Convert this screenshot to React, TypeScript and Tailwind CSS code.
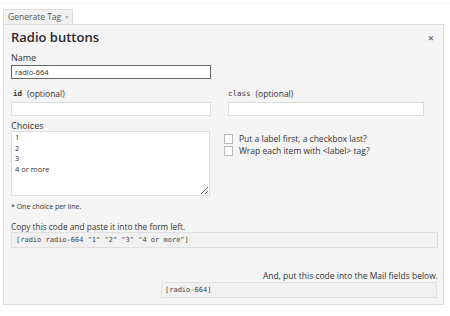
import React from "react";

const sans = { fontFamily: '"Open Sans", "Noto Sans", sans-serif' };
const mono = { fontFamily: '"DejaVu Sans Mono", monospace' };

export default function App() {
  return (
    <div
      className="w-[450px] h-[316px] bg-white pt-[3px] text-[#333]"
      style={sans}
    >
      <div className="h-px bg-[#eeeeee]" />
      <div className="pl-[3px] pt-[5px]">
        <div className="w-[70px] h-[15px] border border-[#dddddd] border-b-0 bg-[#f1f1f1] flex items-center pl-[4px] text-[8.5px] leading-none text-[#555] gap-[3px] whitespace-nowrap">
          <span>Generate Tag</span>
          <span className="text-[5px] text-[#999]">▼</span>
        </div>
      </div>
      <div className="ml-[3px] w-[441px] border border-[#dcdcdc] bg-[#f5f5f5] pl-[7px] pr-[5px] pb-[6px] flex flex-col">
        <div className="h-[25px] flex items-center justify-between pr-[4px]">
          <span className="text-[13px] font-semibold leading-none text-[#2b2b2b]">
            Radio buttons
          </span>
          <span className="text-[11px] font-bold leading-none text-[#777]">×</span>
        </div>
        <div className="mt-[2px] h-[12px] text-[9px] leading-[12px]">Name</div>
        <input
          readOnly
          value="radio-664"
          className="mt-px w-[200px] h-[14px] border border-[#666] bg-white px-[3px] text-[7.5px] text-[#333] outline-none"
          style={sans}
        />
        <div className="mt-[9px] flex gap-[17px]">
          <div className="w-[200px] flex flex-col">
            <div className="h-[12px] text-[8.5px] leading-[12px] flex items-center gap-[5px] pl-[2px]">
              <span className="font-bold text-[7.5px]" style={mono}>
                id
              </span>
              <span>(optional)</span>
            </div>
            <div className="mt-[2px] h-[14px] border border-[#dddddd] bg-white" />
          </div>
          <div className="w-[196px] flex flex-col">
            <div className="h-[12px] text-[8.5px] leading-[12px] flex items-center gap-[5px]">
              <span className="text-[7.5px]" style={mono}>
                class
              </span>
              <span>(optional)</span>
            </div>
            <div className="mt-[2px] h-[14px] border border-[#dddddd] bg-white" />
          </div>
        </div>
        <div className="mt-[4px] flex">
          <div className="w-[200px] flex flex-col">
            <div className="h-[11px] text-[9px] leading-[11px]">Choices</div>
            <textarea
              readOnly
              value={"1\n2\n3\n4 or more"}
              className="h-[65px] w-[199px] border border-[#dddddd] bg-white px-[3px] pt-0 text-[7.5px] leading-[10.5px] text-[#333] outline-none"
              style={sans}
            />
          </div>
          <div className="ml-[13px] mt-[14px] flex flex-col gap-[2px]">
            <div className="flex items-center gap-[6px] h-[10px]">
              <span className="w-[9px] h-[10px] border border-[#bbbbbb] bg-white" />
              <span className="text-[8.5px] leading-none">Put a label first, a checkbox last?</span>
            </div>
            <div className="flex items-center gap-[6px] h-[10px]">
              <span className="w-[9px] h-[10px] border border-[#bbbbbb] bg-white" />
              <span className="text-[8.5px] leading-none">Wrap each item with &lt;label&gt; tag?</span>
            </div>
          </div>
        </div>
        <div className="mt-[5px] h-[12px] text-[7px] leading-[12px]">* One choice per line.</div>
        <div className="mt-[8px] h-[11px] text-[8.3px] leading-[11px]">
          Copy this code and paste it into the form left.
        </div>
        <div
          className="h-[16px] border border-[#e0e0e0] bg-[#f1f1f1] flex items-center pl-[4px] text-[7px] text-[#444]"
          style={mono}
        >
          [radio radio-664 "1" "2" "3" "4 or more"]
        </div>
        <div className="mt-[22px] h-[12px] text-[8.5px] leading-[12px] text-right">
          And, put this code into the Mail fields below.
        </div>
        <div
          className="self-end mr-px w-[276px] h-[16px] border border-[#e0e0e0] bg-[#f1f1f1] flex items-center pl-[3px] text-[7px] text-[#444]"
          style={mono}
        >
          [radio-664]
        </div>
      </div>
    </div>
  );
}
